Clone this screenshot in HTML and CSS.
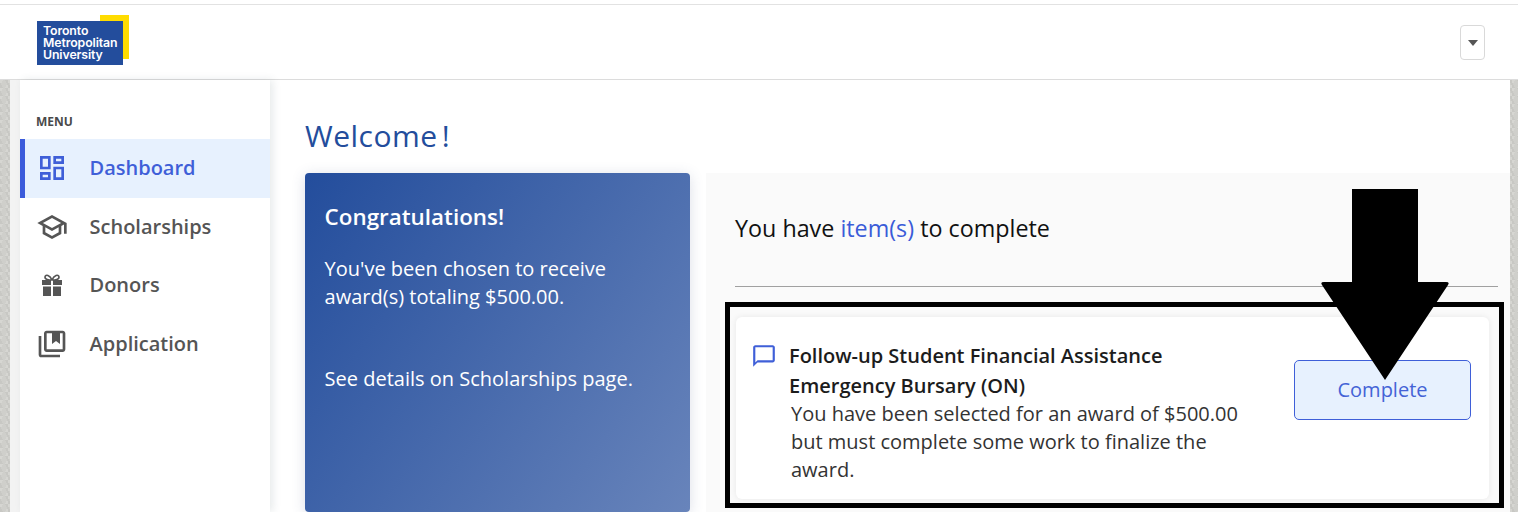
FILE: index.html
```html
<!DOCTYPE html>
<html lang="en">
<head>
    <meta charset="UTF-8">
    <meta name="viewport" content="width=device-width, initial-scale=1.0">
    <title>Dashboard</title>
    <link rel="stylesheet" href="styles.css">
</head>
<body>
    <header class="topbar">
        <div class="logo">
            <span class="logo-back"></span>
            <div class="logo-front">Toronto<br>Metropolitan<br>University</div>
        </div>
        <button class="account-toggle" type="button" aria-label="Account"><span class="caret"></span></button>
    </header>

    <div class="shell">
        <nav class="sidebar">
            <div class="menu-label">MENU</div>
            <a class="nav-item active">
                <svg class="nav-icon" viewBox="0 0 24 24"><path d="M19 5v2h-4V5h4M9 5v6H5V5h4m10 8v6h-4v-6h4M9 17v2H5v-2h4M21 3h-8v6h8V3zM11 3H3v10h8V3zm10 8h-8v10h8V11zm-10 4H3v6h8v-6z"/></svg>
                <span>Dashboard</span>
            </a>
            <a class="nav-item">
                <svg class="nav-icon" viewBox="0 0 24 24"><path d="M12 3L1 9l4 2.18v6L12 21l7-3.82v-6l2-1.09V17h2V9L12 3zm6.82 6L12 12.72 5.18 9 12 5.28 18.82 9zM17 15.99l-5 2.73-5-2.73v-3.72L12 15l5-2.73v3.72z"/></svg>
                <span>Scholarships</span>
            </a>
            <a class="nav-item">
                <svg class="nav-icon" viewBox="-6 -5 32 32">
                    <path class="gift-bow" d="M10 6C8 1 3.5 0 3 3c-.3 2.500 4 3 7 3zM10 6c2-5 6.500-6 7-3 .3 2.500-4 3-7 3z"/>
                    <path d="M0 6h9v5H0zM11 6h9v5h-9zM1 12.500h8V22H1zM11 12.500h8V22h-8z"/>
                </svg>
                <span>Donors</span>
            </a>
            <a class="nav-item">
                <svg class="nav-icon" viewBox="0 0 24 24"><path d="M4 6H2v14c0 1.100.9 2 2 2h14v-2H4V6zm16-4H8c-1.100 0-2 .9-2 2v12c0 1.100.9 2 2 2h12c1.100 0 2-.9 2-2V4c0-1.100-.9-2-2-2zm0 14H8V4h4v8l3-2.250L18 12V4h2v12z"/></svg>
                <span>Application</span>
            </a>
        </nav>

        <main class="content">
            <h1>Welcome<span class="bang">!</span></h1>
            <div class="panels">
                <section class="award-card">
                    <h2>Congratulations!</h2>
                    <p>You've been chosen to receive award(s) totaling $500.00.</p>
                    <p class="award-link">See details on Scholarships page.</p>
                </section>

                <section class="todo">
                    <h3>You have <span class="highlight">item(s)</span> to complete</h3>
                    <hr>
                    <div class="todo-item">
                        <svg class="todo-icon" viewBox="0 0 24 24"><path d="M20 2H4c-1.100 0-2 .9-2 2v18l4-4h14c1.100 0 2-.9 2-2V4c0-1.100-.9-2-2-2zm0 14H6l-2 2V4h16v12z"/></svg>
                        <div class="todo-text">
                            <div class="todo-title">Follow-up Student Financial Assistance Emergency Bursary (ON)</div>
                            <div class="todo-desc">You have been selected for an award of $500.00 but must complete some work to finalize the award.</div>
                        </div>
                        <button class="complete-btn" type="button">Complete</button>
                    </div>
                </section>
            </div>
        </main>
    </div>

    <!-- annotation drawn on top of the screenshot -->
    <div class="callout-box"></div>
    <svg class="callout-arrow" viewBox="0 0 130 192"><path d="M32 0h66v93h28q4 0 2 3L65 191 2 96q-2-3 2-3h28z"/></svg>
</body>
</html>
```

FILE: styles.css
```css
/* Reset some basic styles */
* {
    margin: 0;
    padding: 0;
    box-sizing: border-box;
}

body {
    position: relative;
    height: 512px;
    overflow: hidden;
    font-family: "Open Sans", Arial, sans-serif;
    color: #333;
    background-color: #cfcfcb;
    background-image:
        linear-gradient(60deg, #c8c8c4 25%, transparent 25%, transparent 75%, #c8c8c4 75%),
        linear-gradient(-60deg, #d6d6d2 25%, transparent 25%, transparent 75%, #d6d6d2 75%);
    background-size: 8px 8px;
}

/* Top bar */
.topbar {
    height: 80px;
    padding-top: 4px;
    display: flex;
    justify-content: space-between;
    align-items: flex-start;
    background-color: #fff;
    border-bottom: 1px solid #dcdcdc;
    position: relative;
}

.topbar::before {
    content: "";
    position: absolute;
    left: 0;
    right: 0;
    top: 4px;
    height: 1px;
    background-color: #e2e2e2;
}

.logo {
    position: relative;
    width: 92px;
    height: 50px;
    margin: 11px 0 0 37px;
}

.logo-back {
    position: absolute;
    top: 0;
    right: 0;
    width: 29px;
    height: 44px;
    background-color: #ffdc00;
}

.logo-front {
    position: absolute;
    left: 0;
    bottom: 0;
    width: 86px;
    height: 44px;
    padding: 4px 0 0 6px;
    background-color: #234d9c;
    color: #fff;
    font-family: Inter, sans-serif;
    font-size: 12.3px;
    font-weight: 600;
    line-height: 12px;
    letter-spacing: -0.1px;
}

.account-toggle {
    width: 25px;
    height: 35px;
    margin: 21px 33px 0 0;
    display: flex;
    align-items: center;
    justify-content: center;
    background-color: #fff;
    border: 1px solid #d9d9d9;
    border-radius: 4px;
}

.caret {
    width: 0;
    height: 0;
    margin-top: 1px;
    border-left: 5px solid transparent;
    border-right: 5px solid transparent;
    border-top: 6px solid #555;
}

/* Page shell */
.shell {
    height: 432px;
    margin: 0 8px 0 10px;
    padding-left: 10px;
    display: flex;
    background-color: #f3f3f3;
}

/* Sidebar */
.sidebar {
    width: 250px;
    flex-shrink: 0;
    padding-top: 34px;
    background-color: #fff;
    box-shadow: 3px 0 8px rgba(60, 80, 90, 0.12);
    position: relative;
}

.menu-label {
    height: 25px;
    padding-left: 16px;
    font-size: 12px;
    font-weight: 700;
    line-height: 16px;
    color: #4a4a4a;
}

.nav-item {
    height: 58.5px;
    display: flex;
    align-items: center;
    gap: 21.5px;
    padding-left: 12px;
    font-size: 20px;
    font-weight: 600;
    color: #555;
    border-left: 5px solid transparent;
}

.nav-item span {
    margin-bottom: 1px;
}

.nav-item.active {
    color: #3f5fd8;
    background-color: #e7f1fe;
    border-left-color: #3b5bdb;
}

.nav-icon {
    width: 32px;
    height: 32px;
    margin-left: -1px;
    fill: currentColor;
    flex-shrink: 0;
}

.gift-bow {
    fill: none;
    stroke: currentColor;
    stroke-width: 1.6;
}

/* Main area */
.content {
    flex: 1;
    min-width: 0;
    padding: 37px 0 0 35px;
    background-color: #fff;
}

h1 {
    height: 56px;
    font-size: 30px;
    font-weight: 400;
    line-height: 38px;
    color: #234d9c;
    letter-spacing: 0.5px;
}

.bang {
    margin-left: 4px;
}

.panels {
    display: flex;
    gap: 16px;
    height: 339px;
}

.award-card {
    width: 385px;
    flex-shrink: 0;
    padding: 29px 20px 29px 19.6px;
    border-radius: 4px;
    color: #fff;
    background: linear-gradient(125deg, #234d9c 0%, #6d88bd 100%) no-repeat;
    background-size: 100% 400px;
    box-shadow: 0 2px 14px rgba(60, 80, 120, 0.18);
}

.award-card h2 {
    font-size: 22.4px;
    font-weight: 600;
    line-height: 30px;
    margin-bottom: 23px;
}

.award-card p {
    font-size: 20px;
    line-height: 28px;
}

.award-card .award-link {
    margin-top: 54px;
}

.todo {
    flex: 1;
    min-width: 0;
    padding: 38px 12px 0 29px;
    background-color: #fafafa;
}

.todo h3 {
    font-size: 23.3px;
    font-weight: 400;
    line-height: 34px;
    color: #111;
}

.highlight {
    color: #3a5cd8;
}

.todo hr {
    margin: 41px 0 30px;
    border: none;
    border-top: 1px solid #a0a0a0;
}

.todo-item {
    width: 753px;
    height: 182px;
    margin-left: 1px;
    padding: 24px 18px 0 15px;
    display: flex;
    align-items: flex-start;
    background-color: #fff;
    border-radius: 6px;
    box-shadow: 0 0 6px rgba(0, 0, 0, 0.08);
}

.todo-icon {
    width: 26px;
    height: 26px;
    margin-top: 2px;
    flex-shrink: 0;
    fill: #3f5fd8;
}

.todo-text {
    width: 460px;
    margin-left: 12px;
    flex-shrink: 0;
}

.todo-title {
    width: 400px;
    font-size: 20px;
    font-weight: 600;
    line-height: 30px;
    color: #1c1c1c;
}

.todo-desc {
    margin: -1px 0 0 2px;
    font-size: 20px;
    line-height: 28px;
    color: #333;
}

.complete-btn {
    width: 177px;
    height: 60px;
    margin: 19px 0 0 auto;
    padding-bottom: 2px;
    font-family: inherit;
    font-size: 20px;
    color: #4463d6;
    background-color: #e7f1fe;
    border: 1px solid #3f5fd8;
    border-radius: 5px;
}

/* Annotation overlay */
.callout-box {
    position: absolute;
    left: 725px;
    top: 302px;
    width: 779px;
    height: 206px;
    border: 5px solid #000;
}

.callout-arrow {
    position: absolute;
    left: 1320px;
    top: 189px;
    width: 130px;
    height: 192px;
    fill: #000;
}
```
